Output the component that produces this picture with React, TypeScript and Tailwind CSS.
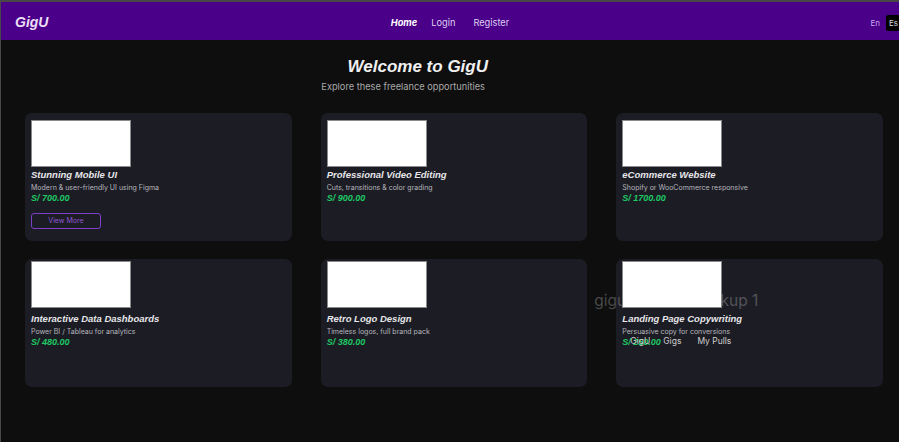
import React from 'react';

type Gig = { title: string; desc: string; price: string };

const ROW_ONE: Gig[] = [
  { title: 'Stunning Mobile UI', desc: 'Modern & user-friendly UI using Figma', price: 'S/ 700.00' },
  { title: 'Professional Video Editing', desc: 'Cuts, transitions & color grading', price: 'S/ 900.00' },
  { title: 'eCommerce Website', desc: 'Shopify or WooCommerce responsive', price: 'S/ 1700.00' },
];

const ROW_TWO: Gig[] = [
  { title: 'Interactive Data Dashboards', desc: 'Power BI / Tableau for analytics', price: 'S/ 480.00' },
  { title: 'Retro Logo Design', desc: 'Timeless logos, full brand pack', price: 'S/ 380.00' },
  { title: 'Landing Page Copywriting', desc: 'Persuasive copy for conversions', price: 'S/ 250.00' },
];

const ARIAL = { fontFamily: '"Liberation Sans", Arial, sans-serif' };

function GigCard({ gig, first, withButton, overlay }: { gig: Gig; first: boolean; withButton?: boolean; overlay?: boolean }) {
  return (
    <div className={`relative h-[128px] rounded-[7px] bg-[#1c1c24] px-[6px] ${first ? 'pt-[7px]' : 'pt-[2px]'}`}>
      {overlay && (
        // stray figma layer label sitting behind the thumbnail
        <span className="absolute left-[-22px] top-[33px] whitespace-nowrap text-[15.5px] leading-[18px] text-white/25">
          gigu-mobile-mockup 1
        </span>
      )}
      <div className="relative z-10 h-[47px] w-[100px] border border-[#8a8a8a] bg-white" />
      <h3
        className={`text-[9.5px] font-bold italic leading-[12px] text-[#e6e6ea] ${first ? 'mt-[2px]' : 'mt-[5px]'}`}
        style={ARIAL}
      >
        {gig.title}
      </h3>
      <p className="mt-[2px] text-[7px] leading-[10px] text-[#b6b6bc]">{gig.desc}</p>
      <p className="text-[9px] font-bold italic leading-[11px] text-[#1ec964]" style={ARIAL}>
        {gig.price}
      </p>
      {withButton && (
        <button className="mt-[9px] h-[16px] w-[70px] rounded-[3px] border border-[#7d3fc8] text-[7px] text-[#9056d8]">
          View More
        </button>
      )}
      {overlay && (
        <div className="absolute left-[14px] top-[76px] z-20 flex gap-[13px] text-[8.5px] leading-[12px] text-[#cfcfcf]">
          <span>GigU</span>
          <span>Gigs</span>
          <span className="ml-[3px]">My Pulls</span>
        </div>
      )}
    </div>
  );
}

export default function App() {
  return (
    <div
      className="min-h-[442px] overflow-hidden border-l border-t-2 border-[#484848] bg-[#0e0e0e]"
      style={{ fontFamily: 'Inter, "Liberation Sans", sans-serif' }}
    >
      <nav className="grid h-[38px] grid-cols-[1fr_auto_1fr] items-center bg-[#4b0089] px-[14px] pt-[3px]">
        <span className="text-[14px] font-bold italic text-[#ecdff7]" style={ARIAL}>
          GigU
        </span>
        <div className="flex items-center gap-[14px] text-[9.25px] text-[#ddd0f2]">
          <span className="font-bold italic text-white">Home</span>
          <span>Login</span>
          <span className="ml-[4px]">Register</span>
        </div>
        <div className="mr-[-16px] flex items-center justify-end gap-[6px] text-[8px]">
          <span className="text-[#c9a9f0]">En</span>
          <span className="rounded-[2px] bg-black px-[3px] py-[2px] text-[#dcdcdc]">Es</span>
        </div>
      </nav>

      <div className="flex w-[487px] flex-col items-end pt-[16px]">
        <h1 className="text-[17px] font-bold italic leading-[22px] text-[#f0f0f0]" style={ARIAL}>
          Welcome to GigU
        </h1>
        <p className="mt-[3px] mr-[3px] text-[9.25px] leading-[12px] text-[#a9a9a9]">Explore these freelance opportunities</p>
      </div>

      <div className="ml-[24px] mt-[20px] grid w-[858px] grid-cols-3 gap-x-[29px] gap-y-[18px]">
        {ROW_ONE.map((g, i) => (
          <GigCard key={g.title} gig={g} first withButton={i === 0} />
        ))}
        {ROW_TWO.map((g, i) => (
          <GigCard key={g.title} gig={g} first={false} overlay={i === 2} />
        ))}
      </div>
    </div>
  );
}
